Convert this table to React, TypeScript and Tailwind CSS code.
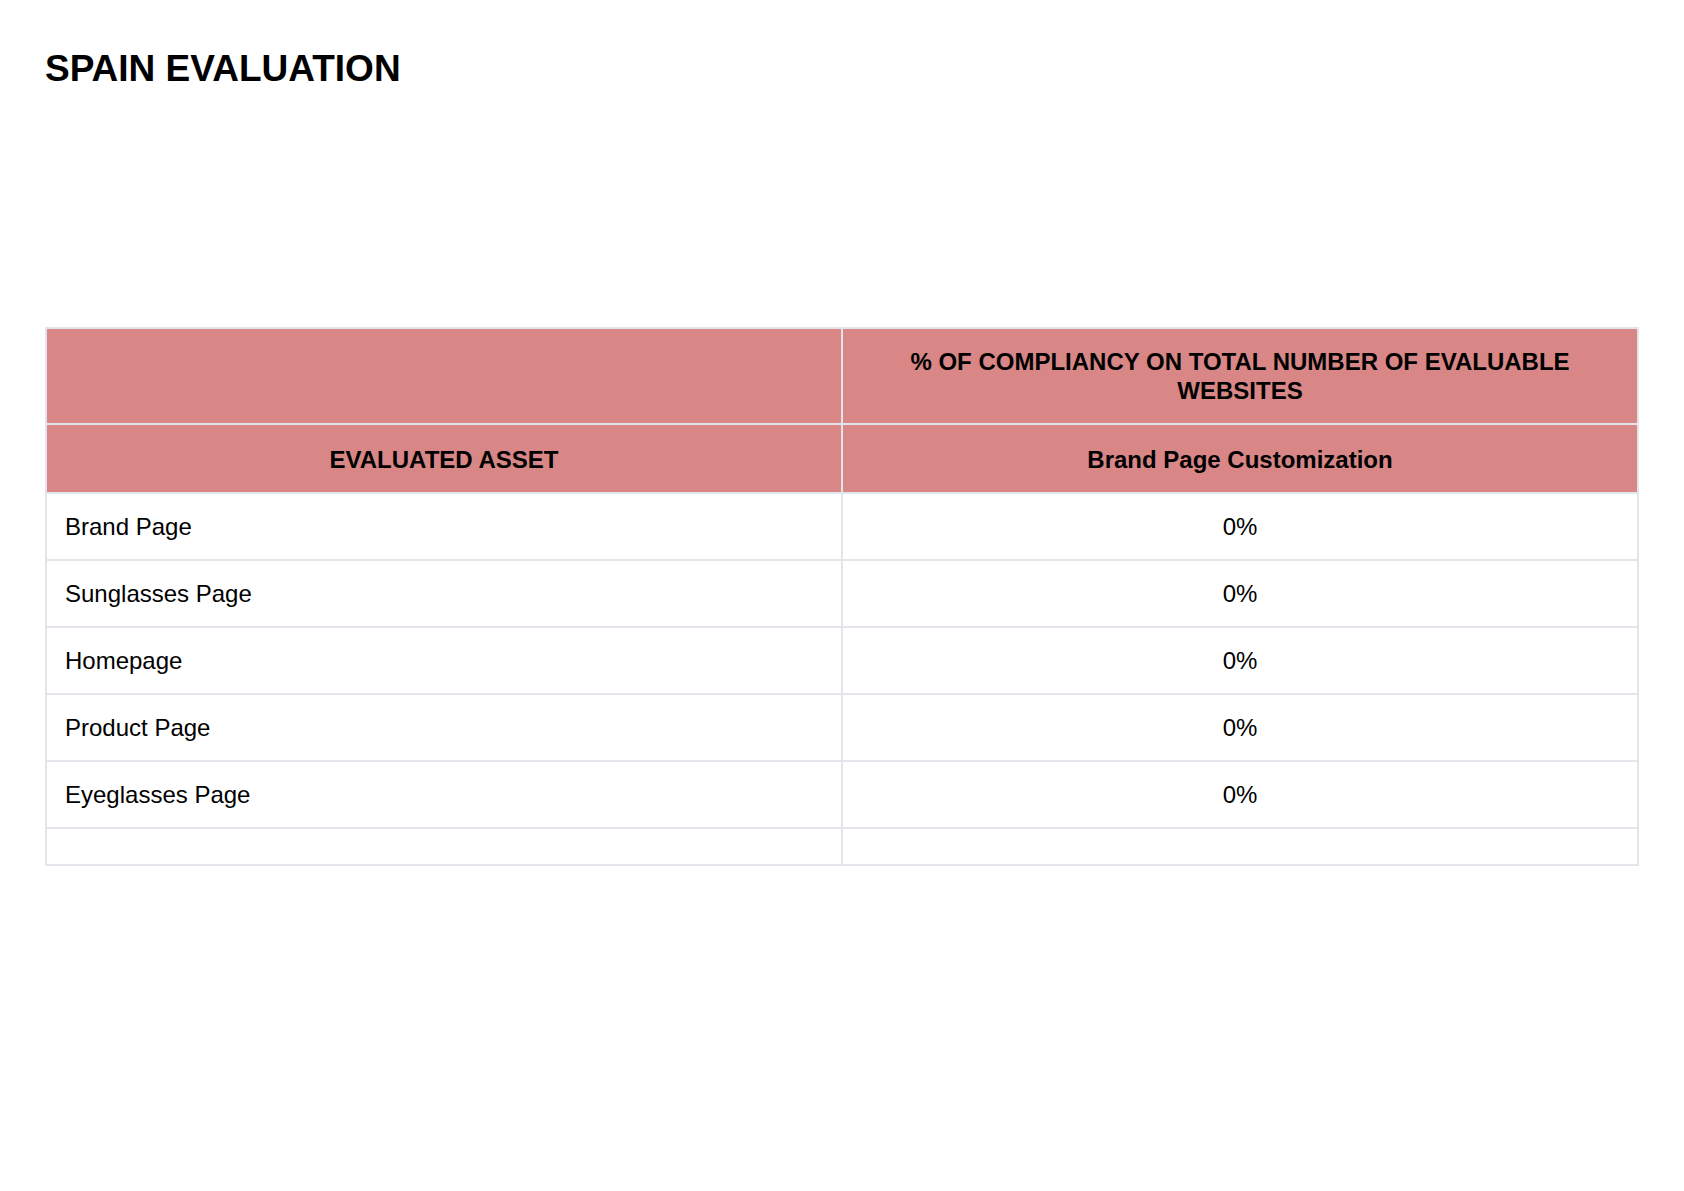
import React from "react";

const rows = [
  { asset: "Brand Page", value: "0%" },
  { asset: "Sunglasses Page", value: "0%" },
  { asset: "Homepage", value: "0%" },
  { asset: "Product Page", value: "0%" },
  { asset: "Eyeglasses Page", value: "0%" },
];

export default function App() {
  return (
    <div
      className="min-h-[1191px] w-full bg-white px-[45px] pt-[50px] text-black"
      style={{ fontFamily: '"Liberation Sans", Arial, Helvetica, sans-serif' }}
    >
      <h1 className="text-[37px] font-bold leading-[37px]">SPAIN EVALUATION</h1>
      <div className="mt-[240px]">
        <table className="w-full table-fixed border-collapse border-2 border-[#e2e5ea] text-[24px] leading-[29px]">
          <thead>
            <tr className="bg-[#d98686]">
              <th className="w-1/2 border-2 border-[#e2e5ea] p-[18px] font-bold"></th>
              <th className="w-1/2 border-2 border-[#e2e5ea] px-[18px] py-[18px] text-center font-bold">
                % OF COMPLIANCY ON TOTAL NUMBER OF EVALUABLE WEBSITES
              </th>
            </tr>
            <tr className="bg-[#d98686]">
              <th className="border-2 border-[#e2e5ea] px-[18px] pt-[20px] pb-[18px] text-center font-bold">
                EVALUATED ASSET
              </th>
              <th className="border-2 border-[#e2e5ea] px-[18px] pt-[20px] pb-[18px] text-center font-bold">
                Brand Page Customization
              </th>
            </tr>
          </thead>
          <tbody>
            {rows.map((r) => (
              <tr key={r.asset}>
                <td className="border-2 border-[#e2e5ea] px-[18px] py-[18px] text-left">{r.asset}</td>
                <td className="border-2 border-[#e2e5ea] px-[18px] py-[18px] text-center">{r.value}</td>
              </tr>
            ))}
            <tr>
              <td className="h-[37px] border-2 border-[#e2e5ea] p-0"></td>
              <td className="h-[37px] border-2 border-[#e2e5ea] p-0"></td>
            </tr>
          </tbody>
        </table>
      </div>
    </div>
  );
}
